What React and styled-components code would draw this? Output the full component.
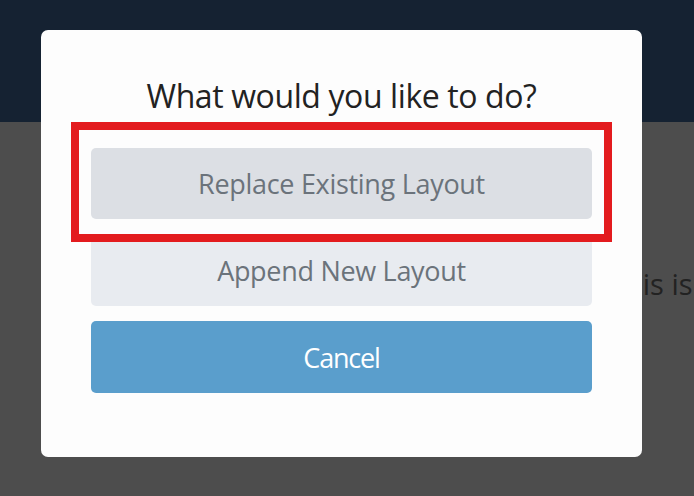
import React from "react";
import styled, { createGlobalStyle } from "styled-components";

const Global = createGlobalStyle`
  html, body { margin: 0; padding: 0; }
  body {
    width: 694px;
    height: 496px;
    overflow: hidden;
    background: #4d4d4d;
    font-family: "Open Sans", "Noto Sans", sans-serif;
  }
`;

const Page = styled.div`
  position: relative;
  width: 694px;
  height: 496px;
  display: flex;
  flex-direction: column;
  background: #4d4d4d;
`;

const TopBar = styled.div`
  height: 122px;
  background: #152232;
  flex: none;
`;

const Content = styled.div`
  flex: 1;
  padding: 142px 0 0 609px;
  font-size: 29px;
  color: #222;
  white-space: nowrap;
`;

const Modal = styled.div`
  position: absolute;
  top: 30px;
  left: 41px;
  width: 601px;
  height: 427px;
  box-sizing: border-box;
  background: #fdfdfd;
  border-radius: 7px;
  padding: 46px 50px 0;
  display: flex;
  flex-direction: column;
`;

const Title = styled.h2`
  margin: 0 0 32px;
  font-weight: 400;
  font-size: 32px;
  line-height: 40px;
  color: #222;
  text-align: center;
  letter-spacing: -0.4px;
`;

const Options = styled.div`
  display: flex;
  flex-direction: column;
  gap: 16px;
`;

const Slot = styled.div`
  position: relative;
`;

const Button = styled.button`
  display: block;
  width: 100%;
  height: ${(p) => p.$h || 71}px;
  margin-top: ${(p) => p.$mt || 0}px;
  border: none;
  border-radius: 5px;
  background: ${(p) => p.$bg};
  color: ${(p) => p.$fg};
  font-family: "Open Sans", "Noto Sans", sans-serif;
  font-size: 27px;
  letter-spacing: ${(p) => p.$ls ?? -0.3}px;
  cursor: pointer;
`;

const Highlight = styled.div`
  position: absolute;
  top: -26px;
  left: -20px;
  right: -20px;
  bottom: -23px;
  border: 8px solid #e31b1e;
  pointer-events: none;
`;

export default function App() {
  return (
    <>
      <Global />
      <Page>
        <TopBar />
        <Content>This is</Content>
        <Modal>
          <Title>What would you like to do?</Title>
          <Options>
            <Slot>
              <Button $bg="#dcdfe4" $fg="#6b737b">Replace Existing Layout</Button>
              <Highlight />
            </Slot>
            <Button $bg="#e8ebf0" $fg="#6b737b">Append New Layout</Button>
            <Button $bg="#5a9ecc" $fg="#ffffff" $h={72} $mt={-1} $ls={-1.2}>Cancel</Button>
          </Options>
        </Modal>
      </Page>
    </>
  );
}
